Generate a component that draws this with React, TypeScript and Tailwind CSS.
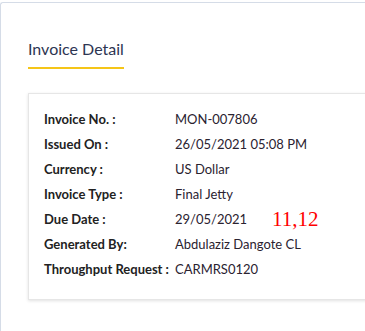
const rows = [
  { label: "Invoice No. :", value: "MON-007806" },
  { label: "Issued On :", value: "26/05/2021 05:08 PM" },
  { label: "Currency :", value: "US Dollar" },
  { label: "Invoice Type :", value: "Final Jetty" },
  { label: "Due Date :", value: "29/05/2021", note: "11,12" },
  { label: "Generated By:", value: "Abdulaziz Dangote CL" },
  { label: "Throughput Request :", value: "CARMRS0120" },
];

export default function App() {
  return (
    <div className="w-[365px] h-[331px] bg-white overflow-hidden font-['Lato','Liberation_Sans',sans-serif]">
      <div className="mt-[2px] h-[329px] border-l border-t border-[#d5dce7] rounded-tl-[3px] pl-[27px] pt-[34px]">
        {/* heading */}
        <div className="inline-block">
          <h2 className="text-[16px] leading-[24px] text-[#2d3552] pb-[6px]">Invoice Detail</h2>
          <div className="h-[2px] w-[96px] bg-[#f5c518]"></div>
        </div>

        {/* detail card */}
        <div className="mt-[24px] w-[400px] bg-white border border-[#e6e6e6] shadow-[0_1px_3px_rgba(0,0,0,0.12)] pl-[15px] pt-[13px] pb-[17px]">
          {rows.map((row) => (
            <div key={row.label} className="flex items-center h-[25px] text-[13px] whitespace-nowrap">
              <div className="w-[131px] shrink-0 font-bold text-[#222222]">{row.label}</div>
              <div className="text-[#2a2230]">{row.value}</div>
              {row.note && (
                <span className="ml-[25px] text-[21px] leading-[25px] text-[#ff0000] font-['Liberation_Serif',serif]">
                  {row.note}
                </span>
              )}
            </div>
          ))}
        </div>
      </div>
    </div>
  );
}
